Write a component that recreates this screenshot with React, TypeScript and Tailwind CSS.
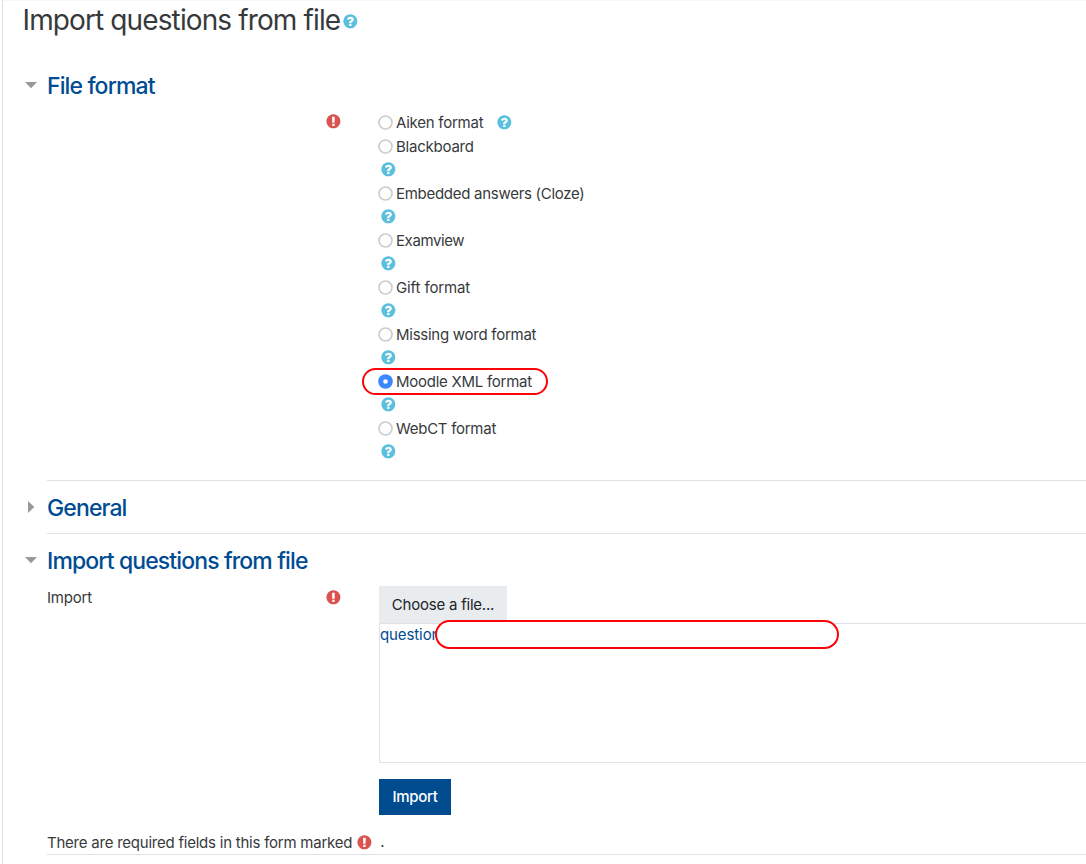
type IconProps = { className?: string };

function HelpIcon({ className = '' }: IconProps) {
  return (
    <svg viewBox="92 92 1536 1536" className={`h-[14px] w-[14px] shrink-0 overflow-visible fill-[#5bc0de] ${className}`} aria-label="Help">
      <path d="M1024 1376v-192q0-14-9-23t-23-9h-192q-14 0-23 9t-9 23v192q0 14 9 23t23 9h192q14 0 23-9t9-23zm256-672q0-88-55.5-163t-138.5-116-170-41q-243 0-371 213-15 24 8 42l132 100q7 6 19 6 16 0 25-12 53-68 86-92 34-24 86-24 48 0 85.5 26t37.5 59q0 38-20 61t-68 45q-63 28-115.5 86.5t-52.5 125.5v36q0 14 9 23t23 9h192q14 0 23-9t9-23q0-19 21.5-49.5t54.5-49.5q32-18 49-28.5t46-35 44.5-48 28-60.5 12.5-81zm384 192q0 209-103 385.5t-279.5 279.5-385.5 103-385.5-103-279.5-279.5-103-385.5 103-385.5 279.5-279.5 385.5-103 385.5 103 279.5 279.5 103 385.5z" />
    </svg>
  );
}

function RequiredIcon({ className = '' }: IconProps) {
  return (
    <svg viewBox="84 92 1536 1536" className={`h-[14px] w-[14px] shrink-0 overflow-visible fill-[#d9534f] ${className}`} aria-label="Required">
      <path d="M896 128q209 0 385.5 103t279.5 279.5 103 385.5-103 385.5-279.5 279.5-385.5 103-385.5-103-279.5-279.5-103-385.5 103-385.5 279.5-279.5 385.5-103zm128 1247v-190q0-14-9-23.5t-22-9.5h-192q-13 0-23 10t-10 23v190q0 13 10 23t23 10h192q13 0 22-9.5t9-23.5zm-2-344l18-621q0-12-10-18-10-8-24-8h-220q-14 0-24 8-10 6-10 18l17 621q0 10 10 17.5t24 7.5h203q14 0 23.5-7.5t10.5-17.5z" />
    </svg>
  );
}

function Caret({ open }: { open: boolean }) {
  return (
    <svg viewBox="0 0 12 12" className="mb-[2px] h-3 w-3 shrink-0 fill-[#999999]">
      {open ? <path d="M0 3h12L6 9.3z" /> : <path d="M3 0v12L9.3 6z" />}
    </svg>
  );
}

function SectionTitle({ open, title }: { open: boolean; title: string }) {
  return (
    <div className="flex h-9 items-center gap-[10px] pl-[22px]">
      <Caret open={open} />
      <h3 className="text-[23px] leading-9 font-medium tracking-[-0.88px] whitespace-nowrap text-[#004c93]">{title}</h3>
    </div>
  );
}

function Radio({ checked, className = '' }: { checked: boolean; className?: string }) {
  return (
    <svg viewBox="0 0 15 15" className={`h-[15px] w-[15px] shrink-0 ${className}`}>
      {checked ? (
        <>
          <circle cx="7.5" cy="7.5" r="7.3" fill="#3b87fd" />
          <circle cx="7.5" cy="7.5" r="2.3" fill="#ffffff" />
        </>
      ) : (
        <circle cx="7.5" cy="7.5" r="6.5" fill="#ffffff" stroke="#cdcdcd" strokeWidth="1.7" />
      )}
    </svg>
  );
}

const formats = [
  { label: 'Blackboard', tracking: 'tracking-[-0.23px]' },
  { label: 'Embedded answers (Cloze)', tracking: 'tracking-[-0.28px]' },
  { label: 'Examview', tracking: 'tracking-[-0.4px]' },
  { label: 'Gift format', tracking: 'tracking-[-0.12px]' },
  { label: 'Missing word format', tracking: 'tracking-[-0.26px]' },
  { label: 'Moodle XML format', tracking: 'tracking-[-0.26px]', checked: true },
  { label: 'WebCT format', tracking: 'tracking-[-0.27px]' },
];

export default function App() {
  return (
    <div className="flex h-[864px] w-full overflow-hidden bg-white pl-[2px] font-['Inter',sans-serif] text-[15px] text-[#373a3c]">
      <main className="flex min-w-0 flex-1 flex-col border-l border-[#dee2e6]">
        <div className="h-px shrink-0 bg-[#f7f7f7]" />
        <header className="flex h-10 shrink-0 items-center gap-[2px] pl-[19.5px]">
          <h2 className="w-[318px] pb-[2px] text-[28px] leading-[38px] font-normal tracking-[-0.88px] whitespace-nowrap">
            Import questions from file
          </h2>
          <HelpIcon />
        </header>

        <section className="mt-[27px] h-[412px] shrink-0">
          <SectionTitle open title="File format" />
          <div className="flex pt-[7px]">
            <div className="w-[375px] shrink-0 pt-[3px] pl-[323px]">
              <RequiredIcon />
            </div>
            <div>
              <div className="flex h-6 items-center">
                <Radio checked={false} className="mb-px" />
                <span className="ml-[3px] leading-6 tracking-[-0.24px]">Aiken format</span>
                <HelpIcon className="mb-[2px] ml-[14px]" />
              </div>
              {formats.map((f) => (
                <div key={f.label} className="h-[47px]">
                  <div className="relative flex h-[23px] items-center gap-[3px]">
                    <Radio checked={!!f.checked} />
                    <span className={`leading-[23px] whitespace-nowrap ${f.tracking}`}>{f.label}</span>
                    {f.checked && (
                      <span className="absolute top-[-2px] left-[-16px] h-[27px] w-[186px] rounded-full border-2 border-[#fc0408]" />
                    )}
                  </div>
                  <div className="flex h-[23px] items-center pb-px pl-[3px]">
                    <HelpIcon />
                  </div>
                </div>
              ))}
            </div>
          </div>
        </section>

        <section className="ml-11 h-[53px] shrink-0 border-t border-[#dee2e6] pt-[9px]">
          <div className="-ml-11">
            <SectionTitle open={false} title="General" />
          </div>
        </section>

        <section className="ml-11 shrink-0 border-t border-[#dee2e6] pt-[9px]">
          <div className="-ml-11">
            <SectionTitle open title="Import questions from file" />
            <div className="flex h-[236px] pt-[7px]">
              <div className="flex w-[376px] shrink-0 pl-11">
                <span className="w-[279px] leading-6 tracking-[-0.2px]">Import</span>
                <RequiredIcon className="mt-1" />
              </div>
              <div className="min-w-0 flex-1">
                <button className="block h-[37px] w-32 bg-[#e9ecef] pt-px tracking-[-0.22px] text-[#212529]">Choose a file...</button>
                <div className="relative h-[140px] border border-r-0 border-[#dee2e6]">
                  <a className="block leading-[22px] tracking-[-0.1px] text-[#004c93]">question</a>
                  <span className="absolute top-[-4px] left-[55px] h-[29px] w-[404px] rounded-full border-2 border-[#fc0408] bg-white" />
                </div>
                <button className="mt-4 block h-9 w-[72px] bg-[#004c8f] font-medium tracking-[-0.35px] text-white">Import</button>
              </div>
            </div>
          </div>
          <div className="mt-4 flex h-6 items-center border-b border-[#dee2e6]">
            <span className="pt-px tracking-[-0.23px] whitespace-nowrap">There are required fields in this form marked</span>
            <RequiredIcon className="mb-px ml-[5px]" />
            <span className="ml-[9px]">.</span>
          </div>
        </section>
      </main>
    </div>
  );
}
